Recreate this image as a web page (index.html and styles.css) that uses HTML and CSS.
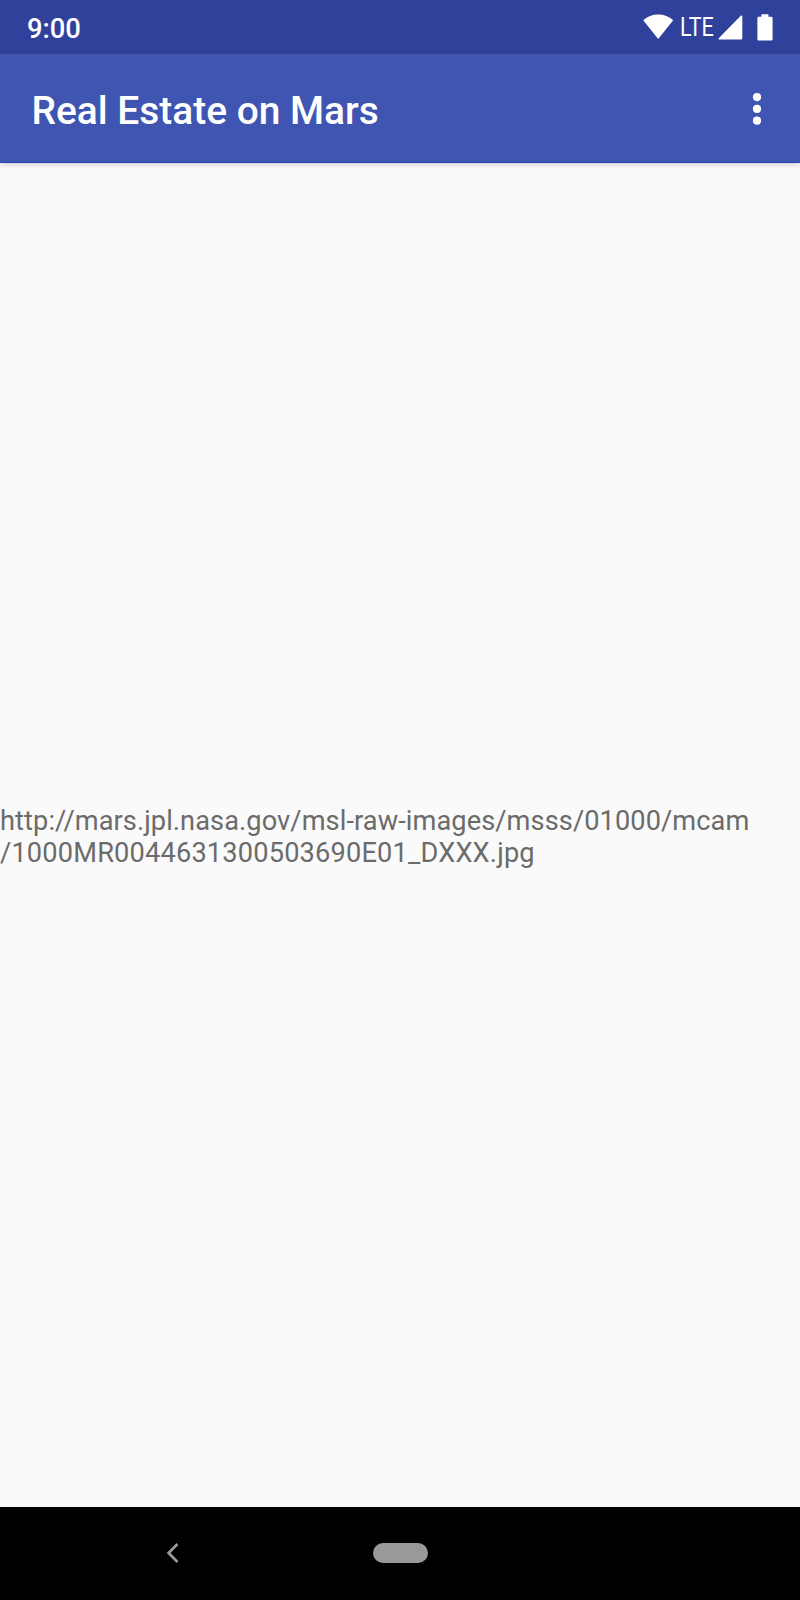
FILE: index.html
```
<!DOCTYPE html>
<html lang="en">
<head>
<meta charset="utf-8">
<title>Real Estate on Mars</title>
<link rel="stylesheet" href="styles.css">
</head>
<body>
<div class="screen">
  <div class="status-bar">
    <span class="clock">9:00</span>
    <div class="status-icons">
      <svg class="wifi" width="31" height="26" viewBox="0 0 31 26"><path d="M15.2 25 0.2 6.2C4.3 2.6 9.5 0.6 15.2 0.6S26.100 2.600 30.200 6.200Z" fill="#fff"/></svg>
      <span class="network">LTE</span>
      <svg class="signal" width="25" height="25" viewBox="0 0 25 25"><path d="M23 0.600Q24.300 0.200 24.300 1.500V23.300Q24.300 24.600 23 24.600H1.500Q-0.200 24.600 1 23Z" fill="#fff"/></svg>
      <svg class="battery" width="16" height="27" viewBox="0 0 16 27"><path d="M4.400 0.200H11.400V2.800H14.400Q15.600 2.800 15.600 4V25.200Q15.600 26.500 14.400 26.500H1.600Q0.400 26.500 0.400 25.200V4Q0.400 2.800 1.600 2.800H4.400Z" fill="#fff"/></svg>
    </div>
  </div>
  <header class="app-bar">
    <h1 class="title">Real Estate on Mars</h1>
    <svg class="overflow" width="10" height="34" viewBox="0 0 10 34" fill="#fff"><circle cx="5" cy="5.100" r="4.100"/><circle cx="5" cy="16.900" r="4.100"/><circle cx="5" cy="28.700" r="4.100"/></svg>
  </header>
  <main class="content">
    <p class="url">http://mars.jpl.nasa.gov/msl-raw-images/msss/01000/mcam<br><span class="url-file">/1000MR0044631300503690E01_DXXX.jpg</span></p>
  </main>
  <nav class="nav-bar">
    <svg class="back" width="14" height="22" viewBox="0 0 14 22"><path d="M11.500 2 2.600 11 11.500 20" fill="none" stroke="#999" stroke-width="2.700"/></svg>
    <div class="home"></div>
  </nav>
</div>
</body>
</html>
```
FILE: styles.css
```
* { box-sizing: border-box; }
body { margin: 0; font-family: Roboto, sans-serif; }
.screen { display: flex; flex-direction: column; width: 800px; height: 1600px; background: #fafafa; overflow: hidden; }
.status-bar { display: flex; justify-content: space-between; height: 54px; padding: 0 27px; background: #30419b; color: #fff; }
.clock { font-size: 27.400px; font-weight: 500; line-height: 58px; }
.status-icons { display: flex; align-items: flex-start; }
.wifi { margin-top: 14px; }
.network { width: 33px; margin-left: 6px; font-size: 25px; line-height: 56px; transform: scaleX(.86); transform-origin: 0 50%; }
.signal { margin: 15px 0 0 5px; }
.battery { margin: 14px 0 0 14px; }
.app-bar { display: flex; justify-content: space-between; height: 109px; padding: 0 38px 0 31.500px; background: #4055b2; border-bottom: 1px solid #2448ae; box-shadow: 0 2px 5px rgba(0, 0, 0, .16); color: #fff; }
.title { margin: 0; font-size: 38.900px; font-weight: 500; line-height: 114px; }
.overflow { margin-top: 38px; }
.content { flex: 1; padding-top: 642px; }
.url { margin: 0; color: #6b6b6b; font-size: 27.200px; line-height: 32px; letter-spacing: .09px; white-space: nowrap; }
.url-file { letter-spacing: .18px; }
.nav-bar { display: flex; height: 93px; padding: 0 0 0 166px; background: #000; }
.back { margin-top: 35px; }
.home { width: 55px; height: 20px; margin: 36px 0 0 192.500px; border-radius: 10px; background: #999; }
```
